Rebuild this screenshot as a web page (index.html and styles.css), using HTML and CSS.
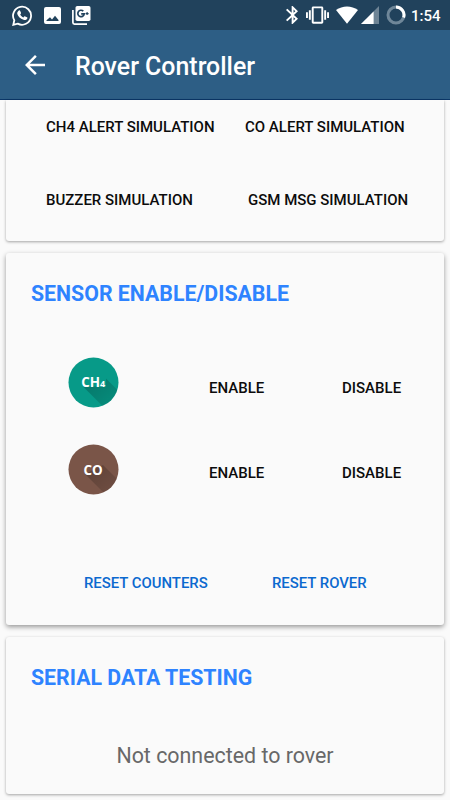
FILE: index.html
```html
<!DOCTYPE html>
<html lang="en">
<head>
    <meta charset="UTF-8">
    <meta name="viewport" content="width=device-width, initial-scale=1.0">
    <title>Rover Controller</title>
    <link rel="stylesheet" href="styles.css">
</head>
<body>

    <div class="status-bar">
        <div class="status-left">
            <svg width="21" height="21" viewBox="0 0 21 21">
                <path d="M2.3 15.3A9 9 0 1 1 5.7 18.6L1.3 19.8Z" fill="none" stroke="#fff" stroke-width="1.8"/>
                <path d="M6.6 5.7c.5-.5 1.3-.5 1.6.2l.8 1.8c.2.5-.1 1-.8 1.7.7 1.4 1.8 2.4 3.3 3 .8-1 1.2-1.2 1.7-1l1.8.9c.6.3.5 1 .2 1.5-.8 1.2-2.2 1.5-3.7 1-3.2-1-5.4-3.3-6.2-5.8-.3-1.3.3-2.5 1.3-3.3z" fill="#fff"/>
            </svg>
            <svg width="17" height="17" viewBox="0 0 17 17">
                <path fill="#fff" fill-rule="evenodd" d="M2 0h13a2 2 0 0 1 2 2v13a2 2 0 0 1-2 2H2a2 2 0 0 1-2-2V2a2 2 0 0 1 2-2zM2.500 14h12V13l-3.500-4.300-3 3.800-2-2.200-3.500 3z"/>
            </svg>
            <svg width="19" height="19" viewBox="0 0 19 19">
                <path d="M.9 4v12.500q0 1.600 1.600 1.600H15" fill="none" stroke="#fff" stroke-width="1.7"/>
                <rect x="3.500" y="0" width="15" height="15" rx="1.8" fill="#fff"/>
                <path d="M11.300 5.200A3.200 3.200 0 1 0 12.200 7.900H9.200" fill="none" stroke="#21425c" stroke-width="1.7"/>
                <path d="M13.600 7.600h3M15.100 6.100v3" stroke="#21425c" stroke-width="1.1"/>
            </svg>
        </div>
        <div class="status-right">
            <svg class="bluetooth" width="12" height="18" viewBox="5 2 12.710 20" preserveAspectRatio="none">
                <path fill="#fff" d="M17.710 7.710L12 2h-1v7.590L6.410 5 5 6.410 10.590 12 5 17.590 6.410 19 11 14.410V22h1l5.710-5.710-4.300-4.290 4.300-4.290zM13 5.830l1.880 1.880L13 9.590V5.830zm1.880 10.460L13 18.170v-3.760l1.880 1.880z"/>
            </svg>
            <svg class="vibrate" width="23" height="18" viewBox="0 3 24 18">
                <path fill="#fff" d="M0 15h2V9H0v6zm3 2h2V7H3v10zm19-8v6h2V9h-2zm-3 8h2V7h-2v10zM16.500 3h-9C6.670 3 6 3.670 6 4.500v15c0 .83.67 1.500 1.500 1.500h9c.83 0 1.500-.67 1.500-1.500v-15c0-.83-.67-1.500-1.500-1.500zM16 19H8V5h8v14z"/>
            </svg>
            <svg class="wifi" width="22" height="18" viewBox="0 0 22 18">
                <path fill="#fff" d="M11 17.700L0 4Q5 .4 11 .4T22 4z"/>
            </svg>
            <svg class="signal" width="18" height="18" viewBox="0 0 18 18">
                <path fill="#fff" fill-opacity=".35" d="M18 0v18H0z"/>
                <path fill="#fff" d="M12.600 5.400V18H0z"/>
            </svg>
            <svg class="battery" width="20" height="20" viewBox="0 0 20 20">
                <circle cx="10" cy="10" r="8" fill="none" stroke="#6f8799" stroke-width="3"/>
                <path d="M10 2a8 8 0 0 1 7.600 10.500" fill="none" stroke="#fff" stroke-width="3"/>
            </svg>
            <span class="time">1:54</span>
        </div>
    </div>

    <header class="app-bar">
        <svg width="30" height="30" viewBox="0 0 24 24">
            <path fill="#fff" d="M20 11H7.830l5.590-5.590L12 4l-8 8 8 8 1.410-1.410L7.830 13H20v-2z"/>
        </svg>
        <h1>Rover Controller</h1>
    </header>

    <main>
        <section class="card simulation">
            <button class="ch4-sim">CH4 ALERT SIMULATION</button>
            <button class="co-sim">CO ALERT SIMULATION</button>
            <button class="buzzer-sim">BUZZER SIMULATION</button>
            <button class="gsm-sim">GSM MSG SIMULATION</button>
        </section>

        <section class="card sensors">
            <h2 class="sensor-title">SENSOR ENABLE/DISABLE</h2>
            <div class="sensor-row">
                <svg width="51" height="51" viewBox="0 0 51 51">
                    <defs>
                        <clipPath id="circle"><circle cx="25.500" cy="25.500" r="25"/></clipPath>
                        <linearGradient id="fade" x1="0" y1="0" x2="1" y2="1">
                            <stop offset="0" stop-color="#000" stop-opacity=".24"/>
                            <stop offset="1" stop-color="#000" stop-opacity=".04"/>
                        </linearGradient>
                    </defs>
                    <circle cx="25.500" cy="25.500" r="25" fill="#079a88"/>
                    <path d="M15 29.500L38 29.500L38 21.500L56 39.500V56H41.500Z" fill="url(#fade)" clip-path="url(#circle)"/>
                    <text x="13.300" y="29.500" class="gas">CH<tspan class="gas-sub">4</tspan></text>
                </svg>
                <button>ENABLE</button>
                <button class="disable">DISABLE</button>
            </div>
            <div class="sensor-row co">
                <svg width="51" height="51" viewBox="0 0 51 51">
                    <circle cx="25.500" cy="25.500" r="25" fill="#7a5548"/>
                    <path d="M17 30L35 21L56 42V56H43Z" fill="url(#fade)" clip-path="url(#circle)"/>
                    <text x="15.500" y="30.500" class="gas">CO</text>
                </svg>
                <button>ENABLE</button>
                <button class="disable">DISABLE</button>
            </div>
            <div class="reset-row">
                <button class="reset-counters">RESET COUNTERS</button>
                <button class="reset-rover">RESET ROVER</button>
            </div>
        </section>

        <section class="card serial">
            <h2 class="serial-title">SERIAL DATA TESTING</h2>
            <p>Not connected to rover</p>
        </section>
    </main>

</body>
</html>
```
FILE: styles.css
```css
* {
    box-sizing: border-box;
}
body {
    margin: 0;
    height: 800px;
    overflow: hidden;
    background-color: #fafafa;
    font-family: Roboto, sans-serif;
}
svg {
    display: block;
    flex: none;
}
h1, h2, p {
    margin: 0;
}
.status-bar {
    display: flex;
    justify-content: space-between;
    height: 30px;
    padding: 0 10px 0 12px;
    background-color: #21425c;
}
.status-left, .status-right {
    display: flex;
    align-items: center;
}
.status-left {
    gap: 11px;
}
.bluetooth {
    margin-right: 8px;
}
.vibrate {
    margin-right: 7px;
}
.wifi {
    margin-right: 3px;
}
.signal {
    margin-right: 7px;
}
.battery {
    margin-right: 5px;
}
.time {
    width: 29px;
    padding-top: 1px;
    color: #fff;
    font-size: 15px;
    font-weight: 500;
    white-space: nowrap;
}
.app-bar {
    display: flex;
    align-items: center;
    gap: 25px;
    height: 70px;
    padding-left: 20px;
    background-color: #2d5e85;
    border-bottom: 1px solid #0b3768;
}
h1 {
    padding-top: 4px;
    color: #fff;
    font-size: 24.9px;
    font-weight: 500;
    line-height: 30px;
}
main {
    display: flex;
    flex-direction: column;
    gap: 12px;
    padding: 0 6px;
}
.card {
    background-color: #fafafa;
    border-radius: 3px;
    box-shadow: 0 1px 3px rgba(0, 0, 0, 0.35);
}
button {
    padding: 0;
    border: none;
    background: none;
    color: #0c0c0c;
    font-family: inherit;
    font-size: 15px;
    font-weight: 500;
    line-height: 20px;
    text-align: left;
    white-space: nowrap;
}
h2 {
    color: #2e83ff;
    font-size: 21.3px;
    font-weight: 700;
    line-height: 28px;
}
.simulation {
    display: grid;
    grid-template-columns: 199px 1fr;
    grid-template-rows: 20px 20px;
    row-gap: 53px;
    height: 141px;
    padding: 17px 0 0 40px;
    border-radius: 0 0 3px 3px;
}
.gsm-sim {
    padding-left: 3px;
}
.sensors {
    height: 372px;
    padding-top: 27px;
    box-shadow: 0 2px 5px rgba(0, 0, 0, 0.4);
}
.sensors h2, .serial h2 {
    padding-left: 25px;
}
.sensor-row {
    display: grid;
    grid-template-columns: 141px 133px 1fr;
    align-items: center;
    height: 51px;
    margin-top: 49px;
    padding-left: 62px;
}
.sensor-row button {
    padding-top: 11px;
}
.sensor-row.co {
    margin-top: 36px;
}
.co button {
    padding-top: 7px;
}
.gas {
    fill: #fff;
    font-family: "Open Sans", sans-serif;
    font-size: 13.4px;
    font-weight: 700;
}
.gas-sub {
    font-size: 9px;
}
.reset-row {
    display: grid;
    grid-template-columns: 188px 1fr;
    margin-top: 78px;
    padding-left: 78px;
}
.reset-row button {
    color: #0b69cf;
    font-size: 14.9px;
}
.serial {
    height: 157px;
    padding-top: 27px;
}
.serial p {
    margin-top: 50px;
    color: #686868;
    font-size: 21.4px;
    line-height: 28px;
    text-align: center;
}
```
